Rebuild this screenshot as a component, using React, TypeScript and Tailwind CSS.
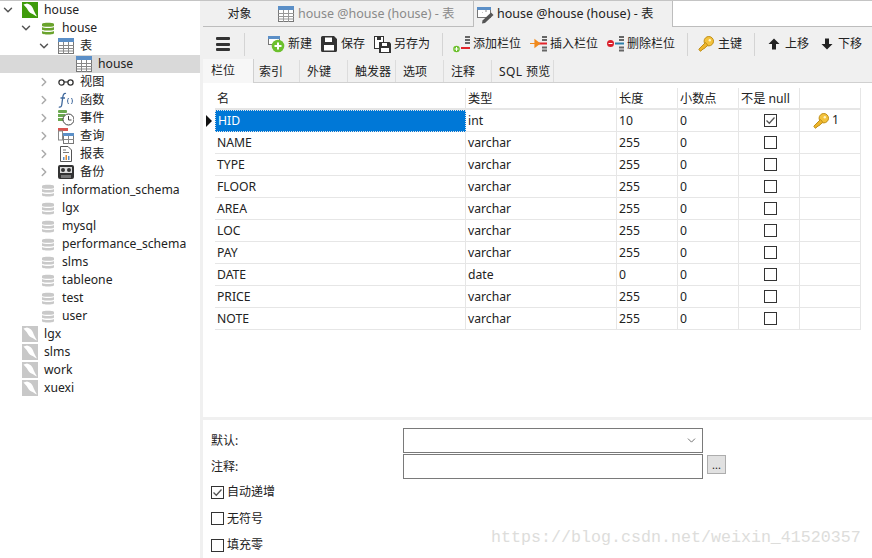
import { ChevronDown, ChevronRight } from 'lucide-react'
import { clsx } from 'clsx'
import type { ReactNode } from 'react'

const font = { fontFamily: '"Noto Sans", "Noto Sans CJK SC", sans-serif' }

function TableIcon({ muted }: { muted?: boolean }) {
  return (
    <svg width="16" height="16" viewBox="0 0 16 16">
      <rect x="0.5" y="0.5" width="15" height="15" fill="#fff" stroke="#777" />
      <rect x="0" y="0" width="16" height="4" fill="#5b8fc7" />
      <path d="M0.5 7.5H16M0.5 10.5H16M0.5 13H16M5.5 4V16M10.5 4V16" stroke={muted ? '#999' : '#888'} fill="none" />
    </svg>
  )
}

function DbIcon({ color }: { color: string }) {
  return (
    <svg className="ml-[2px]" width="12" height="15" viewBox="0 0 13 15">
      <path d="M0 2.5C0 .8 13 .8 13 2.5V4.4C13 6 0 6 0 4.4Z" fill={color} />
      <path d="M0 6C2 7.4 11 7.4 13 6V8.6C13 10.2 0 10.2 0 8.6Z" fill={color} />
      <path d="M0 10.2C2 11.6 11 11.6 13 10.2V12.6C13 14.4 0 14.4 0 12.6Z" fill={color} />
    </svg>
  )
}

function ConnIcon({ on }: { on?: boolean }) {
  return (
    <svg width="16" height="16" viewBox="0 0 16 16">
      <rect width="16" height="16" fill={on ? '#3f9b0b' : '#c8c8c8'} />
      <path d="M1.500 2.500L5 1.500C8 2 10 4 11 6.500C12 9 13 11.500 15 14.500C12.500 13.500 11 12 9.500 11.500C7.500 11 6 8.500 5 6.500C4 5 2.500 4 1.500 2.500Z" fill="#fff" />
    </svg>
  )
}

function KeyIcon() {
  return (
    <svg width="16" height="16" viewBox="0 0 16 16">
      <circle cx="10.800" cy="5.200" r="4.700" fill="#f3c23c" stroke="#c08f17" />
      <circle cx="11.800" cy="4.200" r="1.200" fill="#fff3c0" />
      <path d="M7.500 6.500L0.800 13.200L2.300 15.300L4 14L5 13L6 12.700L9.800 9.300Z" fill="#eeb52c" stroke="#c08f17" strokeLinejoin="round" />
    </svg>
  )
}

const treeIcons: Record<string, ReactNode> = {
  view: (
    <svg width="16" height="16" viewBox="0 0 16 16">
      <circle cx="3.500" cy="8.500" r="2.600" fill="none" stroke="#333" strokeWidth="1.300" />
      <circle cx="12.500" cy="8.500" r="2.600" fill="none" stroke="#333" strokeWidth="1.300" />
      <path d="M6 8H10" stroke="#333" strokeWidth="1.200" />
    </svg>
  ),
  func: (
    <svg width="16" height="16" viewBox="0 0 16 16">
      <path d="M8 1.500C6 .8 5.200 2.500 4.800 5L3.800 12.500C3.500 14.800 2.500 15.500 .8 14.800M2.500 6H7" fill="none" stroke="#3f689c" strokeWidth="1.300" />
      <path d="M10.500 6C9.300 8 9.300 10 10.500 12M13.500 6C14.700 8 14.700 10 13.500 12" fill="none" stroke="#3f689c" />
    </svg>
  ),
  event: (
    <svg width="16" height="16" viewBox="0 0 16 16">
      <rect x="0" y="0" width="9" height="3" rx="1" fill="#6aa84f" />
      <rect x="0" y="4" width="7" height="3" fill="#6aa84f" />
      <rect x="0" y="8" width="6" height="3" fill="#6aa84f" />
      <circle cx="10.500" cy="9.500" r="5.500" fill="#fff" stroke="#444" />
      <path d="M10.500 6V10H13.500" fill="none" stroke="#444" />
    </svg>
  ),
  query: (
    <svg width="16" height="16" viewBox="0 0 16 16">
      <rect x="0" y="0" width="10" height="3" fill="#d9534f" />
      <rect x="0.500" y="3" width="4" height="9" fill="#fff" stroke="#888" />
      <rect x="5.500" y="5.500" width="10" height="10" fill="#fff" stroke="#777" />
      <rect x="5" y="5" width="11" height="3" fill="#5b8fc7" />
      <path d="M10.500 8V16M5.500 11.500H16" stroke="#888" />
    </svg>
  ),
  report: (
    <svg width="16" height="16" viewBox="0 0 16 16">
      <path d="M2.500 .5H10L13.500 4V15.500H2.500Z" fill="#fff" stroke="#555" />
      <path d="M5 4H8M5 6.500H11" stroke="#777" />
      <rect x="5" y="11" width="1.500" height="3" fill="#5b8fc7" />
      <rect x="7.500" y="9" width="1.500" height="5" fill="#e08a2e" />
      <rect x="10" y="10" width="1.500" height="4" fill="#5b8fc7" />
    </svg>
  ),
  backup: (
    <svg width="16" height="16" viewBox="0 0 16 16">
      <rect x="0" y="1" width="16" height="14" rx="2" fill="#333" />
      <rect x="2" y="3" width="12" height="6" fill="#ddd" />
      <circle cx="5" cy="6" r="2" fill="#333" />
      <circle cx="11" cy="6" r="2" fill="#333" />
      <rect x="3" y="11" width="10" height="3" fill="#777" />
    </svg>
  ),
}

type TreeRow = { label: string; level: 0 | 1 | 2 | 3; chevron?: 'down' | 'right'; icon: ReactNode; selected?: boolean }

const greyDb = <DbIcon color="#c9c9c9" />

const treeRows: TreeRow[] = [
  { label: 'house', level: 0, chevron: 'down', icon: <ConnIcon on /> },
  { label: 'house', level: 1, chevron: 'down', icon: <DbIcon color="#6aa32d" /> },
  { label: '表', level: 2, chevron: 'down', icon: <TableIcon /> },
  { label: 'house', level: 3, icon: <TableIcon />, selected: true },
  { label: '视图', level: 2, chevron: 'right', icon: treeIcons.view },
  { label: '函数', level: 2, chevron: 'right', icon: treeIcons.func },
  { label: '事件', level: 2, chevron: 'right', icon: treeIcons.event },
  { label: '查询', level: 2, chevron: 'right', icon: treeIcons.query },
  { label: '报表', level: 2, chevron: 'right', icon: treeIcons.report },
  { label: '备份', level: 2, chevron: 'right', icon: treeIcons.backup },
  { label: 'information_schema', level: 1, icon: greyDb },
  { label: 'lgx', level: 1, icon: greyDb },
  { label: 'mysql', level: 1, icon: greyDb },
  { label: 'performance_schema', level: 1, icon: greyDb },
  { label: 'slms', level: 1, icon: greyDb },
  { label: 'tableone', level: 1, icon: greyDb },
  { label: 'test', level: 1, icon: greyDb },
  { label: 'user', level: 1, icon: greyDb },
  { label: 'lgx', level: 0, icon: <ConnIcon /> },
  { label: 'slms', level: 0, icon: <ConnIcon /> },
  { label: 'work', level: 0, icon: <ConnIcon /> },
  { label: 'xuexi', level: 0, icon: <ConnIcon /> },
]

const levelPad = ['pl-0', 'pl-[18px]', 'pl-[36px]', 'pl-[54px]']

function Sidebar() {
  return (
    <aside className="w-[200px] shrink-0 bg-white">
      {treeRows.map((row, i) => (
        <div key={i} className={clsx('flex h-[18px] items-center', levelPad[row.level], row.selected && 'bg-[#d9d9d9]')}>
          <span className="flex w-[22px] shrink-0 justify-start pl-[1px]">
            {row.chevron === 'down' && <ChevronDown size={14} strokeWidth={2.500} color="#555" />}
            {row.chevron === 'right' && <ChevronRight size={14} strokeWidth={2.500} color="#aaa" />}
          </span>
          <span className="flex w-[22px] shrink-0 items-center">{row.icon}</span>
          <span className="text-[12.2px] leading-[18px] text-[#222]">{row.label}</span>
        </div>
      ))}
    </aside>
  )
}

function Tabs() {
  return (
    <div className="flex h-[26px] shrink-0 items-stretch">
      <div className="flex w-[73px] items-center justify-center border-b border-[#bdbdbd] bg-[#f0f0f0] pt-px text-[12px] text-[#222]">对象</div>
      <div className="flex w-[197px] items-center gap-1 border-b border-[#bdbdbd] bg-[#f0f0f0] pl-[2px] pt-px text-[12.5px] text-[#8a8a8a]">
        <TableIcon muted />
        <span>house @house (house) - 表</span>
      </div>
      <div className="flex w-[200px] items-center gap-[3px] border-x border-[#bdbdbd] bg-[#f0f0f0] pl-[3px] pt-px text-[12.5px] text-[#222]">
        <svg width="17" height="18" viewBox="0 0 17 18">
          <rect x="0.500" y="1.500" width="13" height="10" fill="#fff" stroke="#777" />
          <rect x="0" y="1" width="14" height="3" fill="#5b8fc7" />
          <path d="M5 6.500H5.500M9 4V6" stroke="#888" />
          <path d="M14 6.500L16.500 9L8 17L5 17.500L5.500 14.500Z" fill="#555" />
        </svg>
        <span>house @house (house) - 表</span>
      </div>
      <div className="flex-1 border-b border-[#bdbdbd] bg-white" />
    </div>
  )
}

function ToolButton({ icon, label, width }: { icon: ReactNode; label: string; width: string }) {
  return (
    <div className={clsx('flex shrink-0 items-center', width)}>
      <span className="flex h-[18px] w-[20px] shrink-0 items-center">{icon}</span>
      <span className="whitespace-nowrap">{label}</span>
    </div>
  )
}

function Sep() {
  return <div className="ml-[11px] mr-[10px] h-[23px] w-px shrink-0 bg-[#d4d4d4]" />
}

const NewIcon = (
  <svg width="17" height="17" viewBox="0 0 17 17">
    <rect x="0.500" y="0.500" width="11" height="8" fill="#fff" stroke="#777" />
    <rect x="0" y="0" width="12" height="3" fill="#5b8fc7" />
    <circle cx="10" cy="10" r="6.300" fill="#6cc02d" />
    <path d="M10 6.500V13.500M6.500 10H13.500" stroke="#fff" strokeWidth="2" />
  </svg>
)
const SaveIcon = (
  <svg width="16" height="16" viewBox="0 0 16 16">
    <path d="M0 1.500A1.500 1.500 0 0 1 1.500 0H13L16 3V14.500A1.500 1.500 0 0 1 14.500 16H1.500A1.500 1.500 0 0 1 0 14.500Z" fill="#333" />
    <rect x="4" y="1.500" width="7" height="4.500" fill="#fff" />
    <rect x="3" y="9" width="10" height="5.500" fill="#fff" />
  </svg>
)
const SaveAsIcon = (
  <svg width="17" height="17" viewBox="0 0 17 17">
    <rect x="0.500" y="0.500" width="9" height="12" fill="#fff" stroke="#333" />
    <rect x="3" y="0" width="4" height="4" fill="#333" />
    <path d="M5 6H15.500L17 7.500V17H5Z" fill="#333" />
    <rect x="8" y="7" width="5" height="3" fill="#fff" />
    <rect x="7" y="12" width="8" height="4" fill="#fff" />
  </svg>
)

function StackIcon({ accent, lead }: { accent: string; lead: ReactNode }) {
  return (
    <svg width="18" height="16" viewBox="0 0 18 16">
      <path d="M12 1H17M12 4H17M12 11.500H17M12 14.500H17" stroke="#666" strokeWidth="2" />
      <path d="M8 7.500H17" stroke={accent} strokeWidth="2" />
      {lead}
    </svg>
  )
}

const AddFieldIcon = (
  <svg width="18" height="17" viewBox="0 0 18 17">
    <path d="M12 1H17M12 4H17M12 7H17" stroke="#666" strokeWidth="2" />
    <path d="M8 12H17" stroke="#e3242b" strokeWidth="2" />
    <circle cx="3.500" cy="13" r="3.300" fill="#6cc02d" />
    <path d="M3.500 11V15M1.500 13H5.500" stroke="#fff" />
  </svg>
)
const InsertFieldIcon = (
  <StackIcon accent="#e3242b" lead={<path d="M0 7.500H5V4L9.500 7.500L5 11V7.500" fill="#f08a1d" stroke="#f08a1d" strokeWidth="1.200" />} />
)
const RemoveFieldIcon = (
  <StackIcon
    accent="#2a7fa8"
    lead={
      <>
        <circle cx="3.500" cy="7.500" r="3.500" fill="#d9202c" />
        <path d="M1.500 7.500H5.500" stroke="#fff" />
      </>
    }
  />
)
const UpIcon = (
  <svg width="12" height="12" viewBox="0 0 12 12">
    <path d="M6 0.500L11.500 6H8V11.500H4V6H0.500Z" fill="#222" />
  </svg>
)
const DownIcon = (
  <svg width="12" height="12" viewBox="0 0 12 12">
    <path d="M6 11.500L11.500 6H8V0.500H4V6H0.500Z" fill="#222" />
  </svg>
)

function Toolbar() {
  return (
    <div className="flex h-[32px] shrink-0 items-center bg-[#f0f0f0] pl-[13px] pt-[2px] text-[12px] text-[#222]">
      <div className="flex h-[14px] w-[14px] shrink-0 flex-col justify-between">
        <span className="h-[3px] rounded-[1px] bg-[#333]" />
        <span className="h-[3px] rounded-[1px] bg-[#333]" />
        <span className="h-[3px] rounded-[1px] bg-[#333]" />
      </div>
      <div className="ml-[14px] mr-[23px] h-[23px] w-px shrink-0 bg-[#d4d4d4]" />
      <ToolButton icon={NewIcon} label="新建" width="w-[53px]" />
      <ToolButton icon={SaveIcon} label="保存" width="w-[53px]" />
      <ToolButton icon={SaveAsIcon} label="另存为" width="w-[57px]" />
      <Sep />
      <ToolButton icon={AddFieldIcon} label="添加栏位" width="w-[77px]" />
      <ToolButton icon={InsertFieldIcon} label="插入栏位" width="w-[77px]" />
      <ToolButton icon={RemoveFieldIcon} label="删除栏位" width="w-[69px]" />
      <Sep />
      <ToolButton icon={<KeyIcon />} label="主键" width="w-[45px]" />
      <Sep />
      <div className="w-[3px] shrink-0" />
      <div className="flex w-[53px] shrink-0 items-center gap-[5px]">{UpIcon}<span>上移</span></div>
      <div className="flex shrink-0 items-center gap-[5px]">{DownIcon}<span>下移</span></div>
    </div>
  )
}

const subTabs = [
  { label: '栏位', cls: 'w-[51px] pl-[8px]' },
  { label: '索引', cls: 'w-[46px] pl-[5px]' },
  { label: '外键', cls: 'w-[48px] pl-[7px]' },
  { label: '触发器', cls: 'w-[48px] pl-[7px]' },
  { label: '选项', cls: 'w-[48px] pl-[7px]' },
  { label: '注释', cls: 'w-[48px] pl-[7px]' },
  { label: 'SQL 预览', cls: 'w-[62px] pl-[7px] tracking-[0.4px]' },
]

function SubTabs() {
  return (
    <div className="flex h-[24px] shrink-0 border-b border-[#d0d0d0] bg-[#f0f0f0] text-[12px] text-[#222]">
      {subTabs.map((t, i) => (
        <div
          key={t.label}
          className={clsx(
            'flex shrink-0 items-center whitespace-nowrap',
            t.cls,
            i === 0 ? 'mb-[-1px] h-[24px] border-r border-[#d0d0d0] bg-[#f7f7f7]' : 'mt-px border-r border-[#dcdcdc] pt-[2px]',
          )}
        >
          {t.label}
        </div>
      ))}
    </div>
  )
}

const fields = [
  ['HID', 'int', '10'],
  ['NAME', 'varchar', '255'],
  ['TYPE', 'varchar', '255'],
  ['FLOOR', 'varchar', '255'],
  ['AREA', 'varchar', '255'],
  ['LOC', 'varchar', '255'],
  ['PAY', 'varchar', '255'],
  ['DATE', 'date', '0'],
  ['PRICE', 'varchar', '255'],
  ['NOTE', 'varchar', '255'],
]

const cols = 'grid grid-cols-[251px_151px_61px_61px_61px_61px]'
const cell = 'flex items-center border-r border-b border-[#e6e6e6] pl-[2px] text-[12.2px] text-[#222]'

function Check({ checked }: { checked?: boolean }) {
  return (
    <span className="flex h-[13px] w-[13px] items-center justify-center border border-[#333] bg-white">
      {checked && (
        <svg width="11" height="11" viewBox="0 0 11 11">
          <path d="M1.500 5.500L4.300 8.300L9.500 2.500" fill="none" stroke="#555" strokeWidth="1.300" />
        </svg>
      )}
    </span>
  )
}

function FieldGrid() {
  return (
    <div className="flex h-[334px] shrink-0 bg-white pt-[5px]">
      <div className="w-[12px] shrink-0 pt-[22px]">
        <div className="flex h-[22px] items-center pl-[3px]">
          <svg width="6" height="12" viewBox="0 0 6 12">
            <path d="M0 0L6 6L0 12Z" fill="#111" />
          </svg>
        </div>
      </div>
      <div className="w-[646px] shrink-0">
        <div className={clsx(cols, 'h-[22px]')}>
          {['名', '类型', '长度', '小数点', '不是 null', ''].map((h, i) => (
            <div key={i} className={clsx(cell, 'whitespace-nowrap border-b-2 pt-[2px]')}>{h}</div>
          ))}
        </div>
        {fields.map((f, i) => (
          <div key={f[0]} className={clsx(cols, 'h-[22px]')}>
            <div className={clsx(cell, i === 0 ? 'border border-dotted border-[#123] bg-[#0078d7] text-white' : 'pt-[2px]')}>{f[0]}</div>
            <div className={clsx(cell, 'pt-[2px]')}>{f[1]}</div>
            <div className={clsx(cell, 'pt-[2px]')}>{f[2]}</div>
            <div className={clsx(cell, 'pt-[2px]')}>0</div>
            <div className={clsx(cell, 'justify-center pl-0')}>
              <Check checked={i === 0} />
            </div>
            <div className={clsx(cell, 'gap-[3px] pl-[13px]')}>
              {i === 0 && (
                <>
                  <KeyIcon />
                  <span>1</span>
                </>
              )}
            </div>
          </div>
        ))}
      </div>
    </div>
  )
}

function OptionRow({ label, checked }: { label: string; checked?: boolean }) {
  return (
    <div className="flex h-[26.500px] items-center gap-[3px] text-[12px] text-[#222]">
      <Check checked={checked} />
      <span>{label}</span>
    </div>
  )
}

function BottomPanel() {
  return (
    <div className="mt-[3px] flex-1 bg-white pl-[8px] pt-[8px]">
      <div className="flex h-[26px] items-start">
        <span className="flex h-[25px] w-[192px] shrink-0 items-center text-[12px] text-[#222]">默认:</span>
        <div className="flex h-[25px] w-[300px] items-center justify-end border border-[#7a7a7a] pr-[4px]">
          <ChevronDown size={13} strokeWidth={1.500} color="#555" />
        </div>
      </div>
      <div className="flex h-[26px] items-start">
        <span className="flex h-[25px] w-[192px] shrink-0 items-center text-[12px] text-[#222]">注释:</span>
        <div className="h-[25px] w-[300px] border border-[#7a7a7a]" />
        <div className="ml-[4px] mt-px flex h-[19px] w-[19px] items-center justify-center border border-[#adadad] bg-[#e1e1e1] text-[11px] leading-none text-[#222]">...</div>
      </div>
      <div className="mt-[-1px]">
        <OptionRow label="自动递增" checked />
        <OptionRow label="无符号" />
        <OptionRow label="填充零" />
      </div>
    </div>
  )
}

export default function App() {
  return (
    <div className="relative flex h-[558px] w-[872px] overflow-hidden border-t border-[#c4c4c4] bg-[#f0f0f0]" style={font}>
      <Sidebar />
      <div className="ml-[3px] flex min-w-0 flex-1 flex-col">
        <Tabs />
        <Toolbar />
        <SubTabs />
        <FieldGrid />
        <BottomPanel />
      </div>
      <div className="absolute left-[491px] top-[527px] whitespace-nowrap text-[16.67px] leading-[20px] text-[#dddddb]" style={{ fontFamily: '"Liberation Mono", monospace' }}>
        https://blog.csdn.net/weixin_41520357
      </div>
    </div>
  )
}
